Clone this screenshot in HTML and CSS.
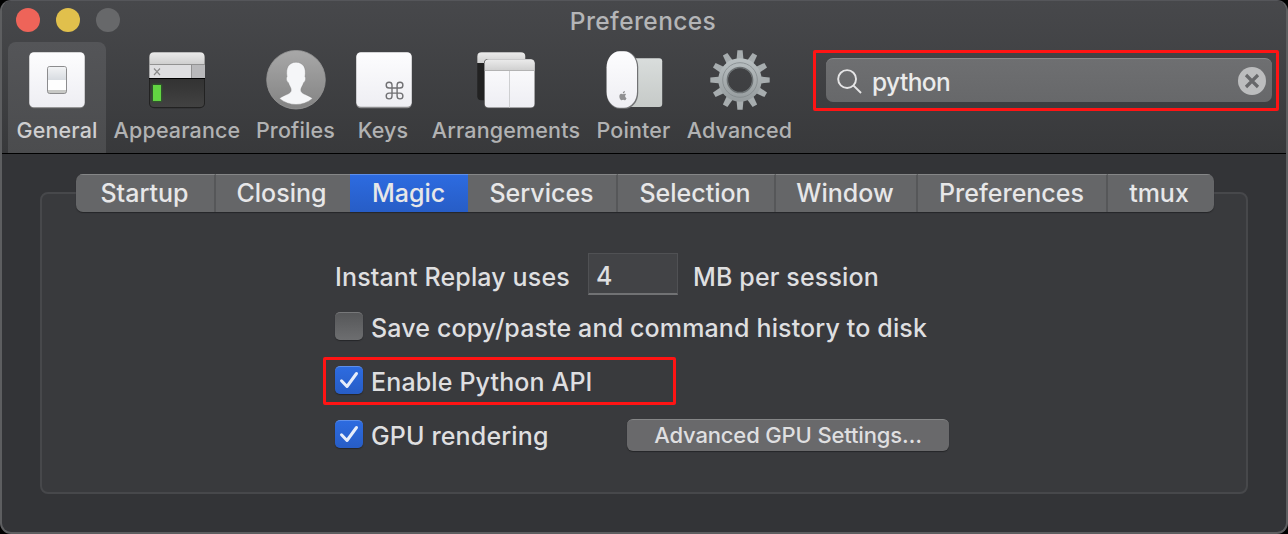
FILE: index.html
```html
<!DOCTYPE html>
<html lang="en">
<head>
<meta charset="utf-8">
<title>Preferences</title>
<link rel="stylesheet" href="styles.css">
</head>
<body>
<div class="window">
  <header class="header">
    <div class="titlebar">
      <div class="lights"><i class="light close"></i><i class="light minimize"></i><i class="light zoom"></i></div>
      <h1 class="title">Preferences</h1>
    </div>
    <div class="toolbar">
      <nav class="tools">
        <div class="tool general active">
          <svg class="icon" viewBox="0 0 60 60">
            <defs>
              <linearGradient id="paper" x1="0" y1="0" x2="0" y2="1"><stop offset="0" stop-color="#fdfdfe"/><stop offset="1" stop-color="#eeeef3"/></linearGradient>
              <linearGradient id="switch" x1="0" y1="0" x2="0" y2="1"><stop offset="0" stop-color="#f2f3f5"/><stop offset="1" stop-color="#d8dce1"/></linearGradient>
              <linearGradient id="bar" x1="0" y1="0" x2="0" y2="1"><stop offset="0" stop-color="#ebebeb"/><stop offset="1" stop-color="#cfcfcf"/></linearGradient>
              <linearGradient id="term" x1="0" y1="0" x2="0" y2="1"><stop offset="0" stop-color="#242424"/><stop offset="1" stop-color="#424242"/></linearGradient>
            </defs>
            <rect x="2.3" y="2.8" width="55.4" height="55.4" rx="4.5" fill="#777"/>
            <rect x="2.3" y="2.3" width="55.4" height="55" rx="4.5" fill="url(#paper)"/>
            <rect x="20.5" y="16.5" width="19" height="27" rx="2.2" fill="#c8c9c6" stroke="#8c8c8e"/>
            <path d="M21 30H39V40H21z" fill="#fefefe"/>
            <path d="M21 30V18.5Q21 17 22.500 17H37.500Q39 17 39 18.500V30z" fill="url(#switch)"/>
          </svg>
          <span class="label">General</span>
        </div>
        <div class="tool appearance">
          <svg class="icon" viewBox="0 0 60 60">
            <rect x="2" y="2.300" width="56" height="56" rx="5" fill="#222"/>
            <rect x="3" y="3" width="54" height="54" rx="4" fill="url(#term)"/>
            <path d="M2.300 14V7Q2.300 2.300 7 2.300H53Q57.700 2.300 57.700 7V14z" fill="url(#bar)"/>
            <path d="M2.300 14H58V28H2.300z" fill="#dedee0"/>
            <path d="M45 14H58V28H45z" fill="#b9b9bb"/>
            <path d="M2.300 14.500H58M44.500 14V28" stroke="#929292" fill="none"/>
            <path d="M2 28.500H58" stroke="#000"/>
            <path d="M7 18.500L13 25M13 18.500L7 25" stroke="#8b8b8b" stroke-width="1.200"/>
            <rect x="4.500" y="33.500" width="11" height="19" rx="2" fill="#2d6427" opacity=".6"/>
            <rect x="6" y="35" width="8" height="16" fill="#62d442"/>
          </svg>
          <span class="label">Appearance</span>
        </div>
        <div class="tool profiles">
          <svg class="icon" viewBox="0 0 60 60">
            <defs><linearGradient id="disc" x1="0" y1="0" x2="0" y2="1"><stop offset="0" stop-color="#a8a8a8"/><stop offset="1" stop-color="#838383"/></linearGradient></defs>
            <circle cx="30" cy="29.700" r="29.300" fill="url(#disc)" stroke="#989898" stroke-width=".8"/>
            <path d="M13.500 48.500C19 44 25 44.500 25.200 40C25.300 37.500 23 35.500 22.300 32.500C20.500 32 19.700 27.500 21 26.700C19.500 18 22.500 12.500 30 12.200C37.500 12.500 40.500 18 39 26.700C40.300 27.500 39.500 32 37.700 32.500C37 35.500 34.700 37.500 34.800 40C35 44.500 41 44 46.500 48.500C37 56.500 23 56.500 13.500 48.500z" fill="#f5f6f8" stroke="#7d7d7d" stroke-width=".4"/>
          </svg>
          <span class="label">Profiles</span>
        </div>
        <div class="tool keys">
          <svg class="icon" viewBox="-1 0 60 60">
            <rect x="2.300" y="2.800" width="55.400" height="55.400" rx="4.500" fill="#8d8d8f"/>
            <rect x="2.300" y="2.300" width="55.400" height="54.500" rx="4.500" fill="url(#paper)"/>
            <path d="M38 38V35A2.900 2.900 0 1 0 35.100 38H46A2.900 2.900 0 1 0 43.100 35V46A2.900 2.900 0 1 0 46 43.100H35.100A2.900 2.900 0 1 0 38 46z" fill="none" stroke="#707073" stroke-width="1.400"/>
          </svg>
          <span class="label">Keys</span>
        </div>
        <div class="tool arrangements">
          <svg class="icon" viewBox="0 0 60 60">
            <rect x="1.300" y="2.300" width="48" height="48" rx="4" fill="#222"/>
            <path d="M1.300 13V6.500Q1.300 2.300 5.500 2.300H45Q49.300 2.300 49.300 6.500V13z" fill="url(#bar)"/>
            <rect x="8" y="9" width="51" height="49.200" rx="4" fill="#555"/>
            <rect x="8.800" y="9.500" width="49.700" height="48" rx="3.800" fill="url(#paper)"/>
            <path d="M8.800 20.500V13.300Q8.800 9.500 12.600 9.500H54.700Q58.500 9.500 58.500 13.300V20.500z" fill="url(#bar)"/>
            <path d="M8.800 20.500H58.500" stroke="#b3b3b3"/><path d="M33.500 21V57.500" stroke="#cecfd1"/>
          </svg>
          <span class="label">Arrangements</span>
        </div>
        <div class="tool pointer">
          <svg class="icon" viewBox="0 0 60 60">
            <defs><linearGradient id="pad" x1="0" y1="0" x2="0" y2="1"><stop offset="0" stop-color="#d9dddc"/><stop offset="1" stop-color="#c6cac8"/></linearGradient></defs>
            <rect x="20" y="8.300" width="38.200" height="48.600" rx="3" fill="url(#pad)"/>
            <rect x="2.600" y="1.300" width="31.600" height="57.400" rx="13" ry="16" fill="#717274"/>
            <rect x="2.600" y="1.300" width="30.400" height="56.400" rx="13" ry="16" fill="url(#paper)"/>
            <path d="M22.100 44.200C20.500 43.300 19.700 44.200 19 44.200S17.500 43.400 16.500 44C14.500 45 15.500 49.500 17.300 50.200C18 50.500 18.500 49.800 19.200 49.800S20.200 50.500 21 50.200C21.700 49.900 22.300 49 22.500 48.200C20.700 47.300 20.800 45 22.100 44.200zM18.800 43.500C18.700 42.200 19.700 41.200 20.900 41C21 42.300 20.100 43.400 18.800 43.500z" fill="#909092"/>
          </svg>
          <span class="label">Pointer</span>
        </div>
        <div class="tool advanced">
          <svg class="icon" viewBox="0 0 60 60">
            <defs>
              <linearGradient id="metal" x1="0" y1="0" x2="0" y2="60" gradientUnits="userSpaceOnUse"><stop offset="0" stop-color="#c0c7c9"/><stop offset="1" stop-color="#8e9496"/></linearGradient>
              <path id="tooth" d="M26.400 11L27.400 .3H32.600L33.600 11z"/>
            </defs>
            <g fill="#a7adaf">
              <use href="#tooth"/><use href="#tooth" transform="rotate(30 30 30)"/><use href="#tooth" transform="rotate(60 30 30)"/><use href="#tooth" transform="rotate(90 30 30)"/><use href="#tooth" transform="rotate(120 30 30)"/><use href="#tooth" transform="rotate(150 30 30)"/><use href="#tooth" transform="rotate(180 30 30)"/><use href="#tooth" transform="rotate(210 30 30)"/><use href="#tooth" transform="rotate(240 30 30)"/><use href="#tooth" transform="rotate(270 30 30)"/><use href="#tooth" transform="rotate(300 30 30)"/><use href="#tooth" transform="rotate(330 30 30)"/>
            </g>
            <circle cx="30" cy="30" r="17" fill="none" stroke="url(#metal)" stroke-width="9.400"/>
            <circle cx="30" cy="30" r="17.300" fill="none" stroke="#83898b" stroke-width=".8"/>
            <circle cx="30" cy="30" r="12.600" fill="none" stroke="#6c7173" stroke-width="1.500"/>
          </svg>
          <span class="label">Advanced</span>
        </div>
      </nav>
      <div class="search-highlight">
        <div class="search">
          <svg class="magnifier" viewBox="0 0 26 26"><circle cx="10.500" cy="10.500" r="9.300"/><path d="M17 17L25 25"/></svg>
          <span class="query">python</span>
          <svg class="clear" viewBox="0 0 28 28"><circle cx="14" cy="14" r="14"/><path d="M8 8L20 20M20 8L8 20"/></svg>
        </div>
      </div>
    </div>
  </header>
  <main class="content">
    <section class="group">
      <div class="tabs">
        <span class="tab t1">Startup</span><span class="tab t2">Closing</span><span class="tab t3 selected">Magic</span><span class="tab t4">Services</span><span class="tab t5">Selection</span><span class="tab t6">Window</span><span class="tab t7">Preferences</span><span class="tab t8">tmux</span>
      </div>
      <div class="form">
        <div class="row replay"><span class="text uses">Instant Replay uses</span><span class="field">4</span><span class="text per">MB per session</span></div>
        <div class="row save"><i class="check"></i><span class="text">Save copy/paste and command history to disk</span></div>
        <div class="row python"><i class="check on"><svg viewBox="0 0 28 28"><path d="M6.500 14.800L12 20.500L21.500 7.500"/></svg></i><span class="text">Enable Python API</span></div>
        <div class="row gpu"><i class="check on"><svg viewBox="0 0 28 28"><path d="M6.500 14.800L12 20.500L21.500 7.500"/></svg></i><span class="text">GPU rendering</span><span class="button">Advanced GPU Settings…</span></div>
      </div>
    </section>
  </main>
</div>
</body>
</html>
```
FILE: styles.css
```css
* { box-sizing: border-box; }
body { margin: 0; background: #000; font-family: Inter, "Liberation Sans", sans-serif; color: #dfdfe0; }
.window { width: 1288px; height: 534px; border: 2px solid #5d5e60; border-top: 1px solid #55565a; border-radius: 11px; overflow: hidden; background: #333437; }
.header { height: 153px; background: linear-gradient(#47484b, #38393b); border-bottom: 1px solid #000; }
.titlebar { height: 41px; display: grid; grid-template-columns: 200px 1fr 200px; }
.lights { display: flex; gap: 16px; padding: 7px 0 0 14px; }
.light { width: 24px; height: 24px; border-radius: 50%; }
.close { background: #ee6459; }
.minimize { background: #e1c04c; }
.zoom { background: #67686a; }
.title { margin: 0; padding-right: 2px; text-align: center; font-size: 24.500px; font-weight: 450; line-height: 40px; letter-spacing: .4px; color: #b4b5b7; }
.toolbar { display: flex; height: 111px; padding-left: 6px; }
.tools { display: flex; width: 799px; }
.tool { height: 111px; display: flex; flex-direction: column; align-items: center; padding-top: 8px; border-radius: 8px 8px 0 0; }
.active { background: linear-gradient(#545558, #4b4c4e); }
.icon { width: 60px; height: 60px; }
.label { font-size: 21.500px; font-weight: 450; line-height: 26px; margin-top: 7px; letter-spacing: .15px; color: #b1b2b3; white-space: nowrap; }
.active .label { color: #cfcfd0; }
.general { width: 98px; }
.appearance { width: 142px; }
.profiles { width: 95px; }
.keys { width: 80px; }
.arrangements { width: 166px; }
.pointer { width: 89px; }
.advanced { width: 123px; }
.search-highlight { margin: 8px 0 0 6px; width: 466px; height: 61px; border: 3px solid #ff1414; border-radius: 2px; padding: 5px 4px 0 10px; }
.search { height: 44px; border-radius: 7px; background: linear-gradient(#6e6f71, #67686a); border-top: 1px solid #88898b; display: flex; align-items: center; padding: 0 6px 0 11px; }
.magnifier { width: 25px; height: 25px; margin-top: 2px; fill: none; stroke: #e5e5e6; stroke-width: 2; }
.query { flex: 1; margin-left: 10px; font-size: 24.500px; font-weight: 500; letter-spacing: -.6px; line-height: 32px; padding-top: 2px; color: #ebebeb; }
.clear { width: 28px; height: 28px; fill: #bcbdbe; }
.clear path { stroke: #67686a; stroke-width: 3.200; }
.content { padding: 38px 38px 0; }
.group { height: 302px; border: 2px solid #47484b; border-radius: 8px; background: #393a3d; }
.tabs { width: 1138px; height: 38px; margin: -20px 0 0 34px; display: flex; border-radius: 7px; overflow: hidden; background: #656668; box-shadow: 0 1px 1px #252628; }
.tab { border-top: 1px solid #858687; border-right: 2px solid #565759; padding-right: 1px; text-align: center; font-size: 25px; font-weight: 500; line-height: 37px; white-space: nowrap; color: #e7e7e8; }
.tab:last-child { border-right: 0; padding-right: 4px; }
.t1 { width: 140px; }
.t2 { width: 134px; border-right: 0; padding-right: 3px; }
.t3 { width: 118px; border-right: 0; }
.t4 { width: 150px; }
.t5 { width: 158px; padding-right: 2px; }
.t6 { width: 142px; padding-right: 2px; }
.t7 { width: 190px; }
.t8 { width: 106px; }
.selected { background: linear-gradient(#2d6be0, #275dc6); border-top-color: #5e8fea; }
.form { padding: 41px 0 0 281px; font-size: 25px; font-weight: 450; letter-spacing: .14px; }
.row { display: flex; align-items: center; white-space: nowrap; }
.replay { height: 42px; padding-left: 12px; }
.uses { width: 253px; }
.field { width: 90px; height: 42px; padding-left: 7px; line-height: 45px; background: #424346; border: 1px solid #505154; border-bottom: 2px solid #717274; margin-right: 15px; }
.text { padding-top: 4px; line-height: 36px; }
.check { width: 28px; height: 28px; border-radius: 5px; margin-right: 8px; background: linear-gradient(#565759, #6d6e70); border-top: 1px solid #77787a; box-shadow: 0 1px 1px #252628; }
.on { background: linear-gradient(#2d6be0, #275dc6); border-top-color: #5e8fea; }
.check svg { display: block; width: 28px; height: 28px; margin-top: -1px; fill: none; stroke: #e7edfa; stroke-width: 3; stroke-linecap: round; stroke-linejoin: round; }
.save { height: 48px; margin-top: 7px; padding-left: 12px; }
.save .text { padding-top: 3px; }
.replay .text { padding-top: 5px; }
.python { height: 48px; width: 353px; margin-top: 7px; padding: 0 0 2px 9px; border: 3px solid #ff1414; border-radius: 2px; }
.gpu { height: 48px; margin-top: 5px; padding-left: 12px; }
.gpu .text { width: 256px; }
.button { width: 322px; height: 32px; margin-top: 2px; border-radius: 6px; text-align: center; font-size: 22px; font-weight: 500; letter-spacing: -.15px; line-height: 31px; background: #69696b; border-top: 1px solid #858687; box-shadow: 0 1px 1px #252628; }
```
